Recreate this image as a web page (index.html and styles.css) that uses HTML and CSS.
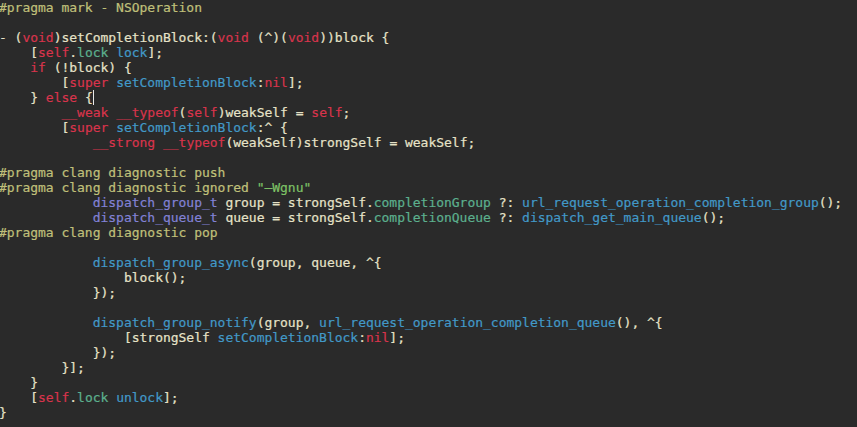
FILE: index.html
```html
<!DOCTYPE html>
<html>
<head>
<meta charset="utf-8">
<link rel="stylesheet" href="styles.css">
</head>
<body>
<pre class="code"><span class="p">#pragma mark - NSOperation</span>

- (<span class="k">void</span>)setCompletionBlock:(<span class="k">void</span> (^)(<span class="k">void</span>))block {
    [<span class="k">self</span>.<span class="pr">lock</span> <span class="m">lock</span>];
    <span class="k">if</span> (!block) {
        [<span class="k">super</span> <span class="m">setCompletionBlock</span>:<span class="k">nil</span>];
    } <span class="k">else</span> {<span class="caret"></span>
        <span class="k">__weak</span> <span class="k">__typeof</span>(<span class="k">self</span>)weakSelf = <span class="k">self</span>;
        [<span class="k">super</span> <span class="m">setCompletionBlock</span>:^ {
            <span class="k">__strong</span> <span class="k">__typeof</span>(weakSelf)strongSelf = weakSelf;

<span class="p">#pragma clang diagnostic push</span>
<span class="p">#pragma clang diagnostic ignored </span><span class="s">"–Wgnu"</span>
            <span class="t">dispatch_group_t</span> group = strongSelf.<span class="pr">completionGroup</span> ?: <span class="m">url_request_operation_completion_group</span>();
            <span class="t">dispatch_queue_t</span> queue = strongSelf.<span class="pr">completionQueue</span> ?: <span class="m">dispatch_get_main_queue</span>();
<span class="p">#pragma clang diagnostic pop</span>

            <span class="m">dispatch_group_async</span>(group, queue, ^{
                block();
            });

            <span class="m">dispatch_group_notify</span>(group, <span class="m">url_request_operation_completion_queue</span>(), ^{
                [strongSelf <span class="m">setCompletionBlock</span>:<span class="k">nil</span>];
            });
        }];
    }
    [<span class="k">self</span>.<span class="pr">lock</span> <span class="m">unlock</span>];
}</pre>
</body>
</html>
```
FILE: styles.css
```css
html, body {
  margin: 0;
  padding: 0;
  background: #2a2a2a;
}
.code {
  margin: 0 0 0 -1px;
  padding: 0;
  font-family: "DejaVu Sans Mono", "Liberation Mono", monospace;
  font-size: 13px;
  line-height: 15px;
  letter-spacing: -0.02px;
  color: #e6e2c8;
  white-space: pre;
  -webkit-text-stroke: 0.2px currentColor;
}
.k { color: #d8344c; }
.p { color: #c0c07a; }
.m { color: #4299c8; }
.pr { color: #5cb08e; }
.t { color: #8282d6; }
.s { color: #7ec266; }
.caret {
  display: inline-block;
  width: 1px;
  height: 15px;
  background: #e8e8e8;
  vertical-align: top;
  -webkit-text-stroke: 0;
}
```
